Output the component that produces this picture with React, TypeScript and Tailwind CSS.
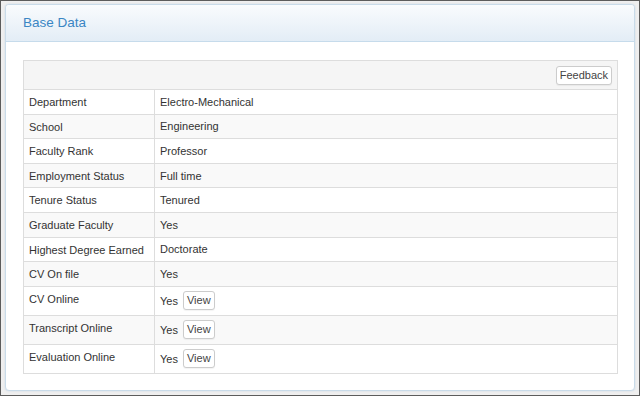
import React from "react";

type Row = { label: string; value: string; file?: boolean };

const rows: Row[] = [
  { label: "Department", value: "Electro-Mechanical" },
  { label: "School", value: "Engineering" },
  { label: "Faculty Rank", value: "Professor" },
  { label: "Employment Status", value: "Full time" },
  { label: "Tenure Status", value: "Tenured" },
  { label: "Graduate Faculty", value: "Yes" },
  { label: "Highest Degree Earned", value: "Doctorate" },
  { label: "CV On file", value: "Yes" },
  { label: "CV Online", value: "Yes", file: true },
  { label: "Transcript Online", value: "Yes", file: true },
  { label: "Evaluation Online", value: "Yes", file: true },
];

const SmallButton = ({ children }: { children: React.ReactNode }) => (
  <button className="h-[19px] px-[3px] rounded-[3px] border border-[#cccccc] bg-white text-[11px] leading-none text-[#444] shadow-[0_1px_1px_rgba(0,0,0,0.05)]">
    {children}
  </button>
);

export default function App() {
  return (
    <div
      className="w-[640px] h-[396px] border border-[#5c5c5c] bg-[#efefef] pt-[3px] pb-[4px] px-[4px]"
      style={{ fontFamily: '"Liberation Sans", Arial, sans-serif' }}
    >
      <div className="h-full rounded-[4px] border border-[#c9dbe9] bg-white shadow-[0_0_2px_rgba(150,180,210,0.4)] flex flex-col overflow-hidden">
        {/* panel heading */}
        <div className="h-[37px] shrink-0 flex items-center pl-[17px] border-b border-[#c6dbeb] bg-gradient-to-b from-[#f9fbfd] to-[#e3edf6]">
          <span className="text-[13.5px] text-[#3a86c4]">Base Data</span>
        </div>

        <div className="pt-[18px] pl-[17px] pr-[16px]">
          <table className="w-full border-collapse border border-[#dddddd] text-[11px] text-[#333]">
            <tbody>
              <tr className="bg-[#f5f5f5] h-[29px]">
                <td colSpan={2} className="border border-[#dddddd] pr-[5px] text-right align-middle">
                  <SmallButton>Feedback</SmallButton>
                </td>
              </tr>
              {rows.map((r, i) => (
                <tr
                  key={r.label}
                  className={`${i % 2 === 1 ? "bg-[#f9f9f9]" : "bg-white"} ${r.file ? "h-[29px]" : "h-[24.6px]"}`}
                >
                  <td className="w-[131px] border border-[#dddddd] pl-[5px] align-top pt-[6px] leading-[12px]">
                    {r.label}
                  </td>
                  <td className="border border-[#dddddd] pl-[5px] align-middle leading-[12px]">
                    {r.file ? (
                      <div className="flex items-center gap-[5px]">
                        <span>{r.value}</span>
                        <SmallButton>View</SmallButton>
                      </div>
                    ) : (
                      r.value
                    )}
                  </td>
                </tr>
              ))}
            </tbody>
          </table>
        </div>
      </div>
    </div>
  );
}
